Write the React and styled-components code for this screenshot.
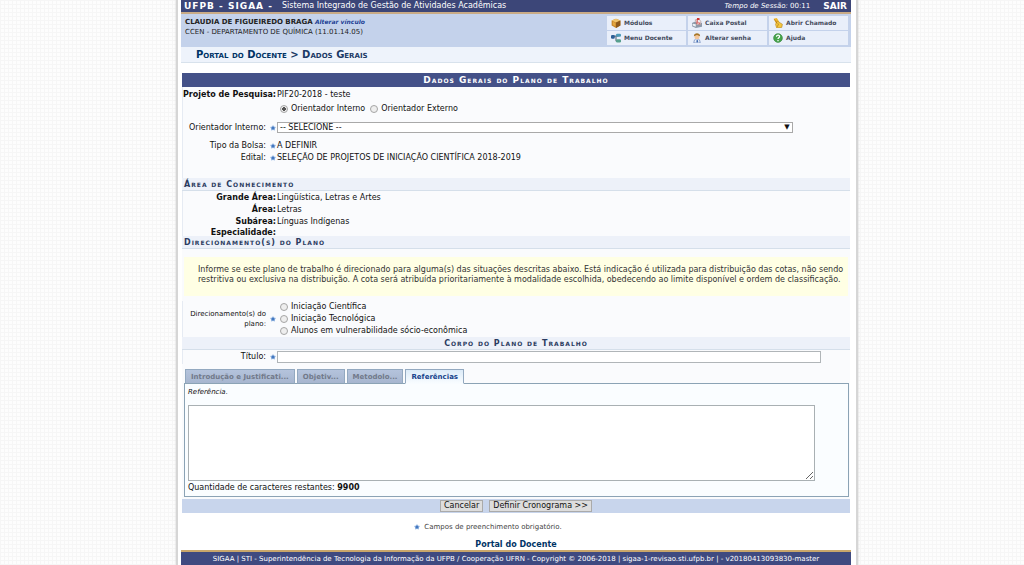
import React, { useState } from "react";
import styled, { createGlobalStyle } from "styled-components";

const GlobalStyle = createGlobalStyle`
	* {
		box-sizing: border-box;
	}

	body {
		margin: 0;
		color: #222;
		font-family: Verdana, "DejaVu Sans", sans-serif;
		font-size: 7px;
		line-height: 10px;
		background-color: #fdfdfd;
		background-image: repeating-linear-gradient(0deg, #f6f6f6 0 1px, transparent 1px 4px),
			repeating-linear-gradient(90deg, #f6f6f6 0 1px, transparent 1px 4px);
	}

	input,
	select,
	textarea,
	button {
		margin: 0;
		font: inherit;
		color: inherit;
	}

	a {
		color: #003366;
		text-decoration: none;
	}
`;

const Wrapper = styled.div`
	width: 100%;
	max-width: 692px;
	margin: 0 auto;
	padding-left: 10px;
`;

const Page = styled.div`
	padding: 0 5px 0 3px;
	background: #fff;
	border: solid #d6d6d6;
	border-width: 0 2px;
	box-shadow: 0 0 2px #ccc;
`;

const TopBar = styled.header`
	display: flex;
	align-items: center;
	height: 14px;
	padding: 0 4px 0 3px;
	color: #fff;
	background: #3c4678;
	border-bottom: 2px solid #c9ab86;
`;

const Brand = styled.h1`
	margin: 0 9px 0 0;
	font-size: 9px;
	letter-spacing: 1px;
`;

const SystemName = styled.span`
	font-size: 8px;
`;

const Session = styled.span`
	margin-left: auto;
	margin-right: 13px;
`;

const Exit = styled.a`
	color: #fff;
	font-size: 9px;
	font-weight: bold;
`;

const UserBar = styled.div`
	display: flex;
	justify-content: space-between;
	height: 33px;
	padding: 2px 3px 1px 4px;
	background: #c4d2eb;
`;

const UserInfo = styled.div`
	padding-top: 1px;
`;

const ChangeLink = styled.a`
	color: #1c3f95;
	font-size: 6px;
	font-style: italic;
	font-weight: bold;
`;

const Shortcuts = styled.nav`
	display: grid;
	grid-template-columns: repeat(3, 79px);
	grid-auto-rows: 14px;
	gap: 1px 2px;
`;

const Shortcut = styled.a`
	display: flex;
	align-items: center;
	gap: 3px;
	padding-left: 4px;
	color: #444b5c;
	font-size: 6px;
	font-weight: bold;
	background: #e9effa;

	svg {
		width: 10px;
		height: 10px;
	}
`;

const Breadcrumb = styled.nav`
	height: 16px;
	padding: 3px 15px;
	color: #1c3a66;
	font-size: 10px;
	font-weight: bold;
	font-variant: small-caps;
	background: #eef3fb;
	border-bottom: 1px solid #d8e2ec;
`;

const Form = styled.form`
	margin: 10px 1px 0;
	font-size: 8px;
	background: #fafbfd;
`;

const FormTitle = styled.h2`
	height: 14px;
	margin: 0;
	padding: 2px;
	color: #fff;
	font-size: 9px;
	letter-spacing: 1px;
	font-variant: small-caps;
	text-align: center;
	background: #445188;
`;

const SectionTitle = styled.h3`
	height: 13px;
	margin: 0;
	padding: 2px 2px 0;
	color: #2b3b60;
	font-size: 8px;
	letter-spacing: 1px;
	font-variant: small-caps;
	text-align: ${({ $align }) => $align || "left"};
	background: #edf1f9;
	border-bottom: 1px solid #d5dfea;
`;

const Fields = styled.div`
	padding-top: ${({ $top }) => $top || 0}px;
	padding-bottom: ${({ $bottom }) => $bottom || 0}px;
	border-left: 1px solid #e6ebf3;
`;

const Row = styled.div`
	display: grid;
	grid-template-columns: 94px 1fr;
	align-items: center;
	height: ${({ $height }) => $height || 12}px;
	color: #111;
`;

const Label = styled.label`
	display: flex;
	align-items: center;
	justify-content: flex-end;
	padding-right: 1px;
	font-size: ${({ $small }) => ($small ? 7 : 8)}px;
	font-weight: ${({ $bold }) => ($bold ? "bold" : "normal")};
	text-align: right;
	white-space: ${({ $small }) => ($small ? "normal" : "nowrap")};
`;

const Star = styled.svg`
	flex: none;
	width: 6px;
	height: 6px;
	margin-left: 4px;
`;

const Choices = styled.div`
	display: flex;
	flex-direction: ${({ $stacked }) => ($stacked ? "column" : "row")};
	gap: ${({ $stacked }) => ($stacked ? 0 : 5)}px;
	padding-left: 3px;
`;

const Choice = styled.label`
	display: flex;
	align-items: center;
	gap: 3px;
	height: 12px;
`;

const Radio = styled.input.attrs({ type: "radio" })`
	appearance: none;
	width: 8px;
	height: 8px;
	background: #eee;
	border: 1px solid #a5a5a5;
	border-radius: 50%;

	&:checked {
		background: radial-gradient(circle, #555 0 2px, #eee 2px);
	}
`;

const SelectBox = styled.div`
	position: relative;
	width: 90%;

	&::after {
		content: "▼";
		position: absolute;
		top: 0;
		right: 3px;
		font-size: 7px;
		pointer-events: none;
	}
`;

const Select = styled.select`
	display: block;
	appearance: none;
	width: 100%;
	height: 11px;
	padding: 0 2px;
	background: #fff;
	border: 1px solid #a9a9a9;
	border-radius: 0;
`;

const TextInput = styled.input`
	width: 95%;
	height: 12px;
	padding: 0 2px;
	background: #fff;
	border: 1px solid #b0b5b8;
`;

const Notice = styled.p`
	margin: 8px 2px 5px;
	padding: 8px 4px 11px 14px;
	min-height: 39px;
	color: #333;
	background: #ffffe4;
`;

const Tabs = styled.div`
	display: flex;
	gap: 2px;
	padding: 5px 3px 0;
`;

const Tab = styled.button`
	height: 15px;
	padding: 0 5px;
	margin-bottom: -1px;
	color: ${({ $active }) => ($active ? "#15428b" : "#71798a")};
	font-size: 7px;
	font-weight: bold;
	background: ${({ $active }) =>
		$active ? "linear-gradient(#dcebf8, #f8fcff)" : "linear-gradient(#b4c3dc, #a7b6cf)"};
	border: 1px solid #93a9c0;
	border-bottom-color: ${({ $active }) => ($active ? "#f8fcff" : "#8ba3b5")};
	z-index: ${({ $active }) => ($active ? 1 : 0)};
`;

const TabPanel = styled.div`
	height: 114px;
	margin: 0 1px 2px 2px;
	padding: 3px;
	color: #111;
	background: #fafdff;
	border: 1px solid #8ba3b5;
`;

const Hint = styled.label`
	display: block;
	margin-bottom: 8px;
	font-size: 7px;
	font-style: italic;
`;

const TextArea = styled.textarea`
	display: block;
	width: calc(100% - 30px);
	height: 76px;
	margin-bottom: 2px;
	background: #fff;
	border: 1px solid #a9b0b3;
`;

const Actions = styled.div`
	display: flex;
	justify-content: center;
	gap: 6px;
	padding: 1px 0;
	background: #c8d5ec;
`;

const Button = styled.button`
	height: 12px;
	padding: 0 3px;
	color: #111;
	background: #ddd;
	border: 1px solid #aaa;
`;

const Required = styled.p`
	display: flex;
	align-items: center;
	justify-content: center;
	gap: 4px;
	margin: 9px 0 8px;
	padding-right: 56px;
	color: #444;

	svg {
		margin: 0;
	}
`;

const PortalLink = styled.a`
	display: block;
	font-size: 8px;
	font-weight: bold;
	text-align: center;
`;

const Footer = styled.footer`
	min-height: 15px;
	padding-top: 2px;
	color: #fff;
	text-align: center;
	background: #3f4a80;
	border-top: 2px solid #c9a66b;
`;

const StarIcon = () => (
	<Star viewBox="0 0 12 12" aria-hidden="true">
		<path d="M6 0l2 3 4 1-2 3v4l-4-1-4 1V7L0 4l4-1z" fill="#9dbce4" />
		<circle cx="6" cy="6" r="3" fill="#4478c0" />
	</Star>
);

const ICONS = {
	modules: (
		<>
			<path d="M1 4l7-3 7 3v8l-7 4-7-4z" fill="#c8882a" />
			<path d="M1 4l7-3 7 3-7 3z" fill="#f0c46c" />
			<path d="M8 7l7-3v8l-7 4z" fill="#8d591b" />
			<path d="M3 6l4 2v5l-4-2z" fill="#e4a740" />
		</>
	),
	mail: (
		<>
			<path d="M0 8l4-2 12 2v6l-10 2-6-3z" fill="#8d9aaa" />
			<path d="M1 9l5 1v4l-5-2z" fill="#edf2f6" />
			<path d="M5 3l6-1 3 3v5l-6 1z" fill="#f1f1f1" stroke="#a88" />
			<path d="M8 0h4v3H9v6H7z" fill="#cf3535" />
			<path d="M10 6l3 2-2 3z" fill="#cf5151" />
		</>
	),
	ticket: (
		<>
			<path d="M1 1l5-1 4 6-5 3z" fill="#efb62c" />
			<path d="M7 5l8 5-1 5-8 1-2-6z" fill="#f4c83e" stroke="#b78420" />
			<path d="M2 2l5 7M9 9l-2 5" stroke="#a86c17" />
		</>
	),
	menu: (
		<>
			<path d="M4 5h4v7h3M8 5h4" fill="none" stroke="#678" strokeWidth="2" />
			<rect x="0" y="3" width="6" height="6" rx="2" fill="#2c5f96" />
			<rect x="8" y="1" width="8" height="5" rx="2" fill="#4c9ab9" />
			<rect x="8" y="10" width="8" height="5" rx="2" fill="#57a08e" />
		</>
	),
	password: (
		<>
			<path d="M3 16c0-5 2-7 5-7s5 2 5 7z" fill="#e8eef7" stroke="#5575b0" />
			<circle cx="8" cy="6" r="4" fill="#f4c79c" />
			<path d="M3 5c0-6 10-6 10 0L8 3z" fill="#a67628" />
			<path d="M8 10l2 3-2 3-1-3z" fill="#3261ad" />
		</>
	),
	help: (
		<>
			<circle cx="8" cy="8" r="7" fill="#47a54b" stroke="#2f8138" />
			<path d="M5.5 6c0-3.500 5-3.500 5-.5 0 2-2.500 2-2.500 4M8 11v2" fill="none" stroke="#fff" strokeWidth="2" />
		</>
	),
};

const shortcuts = [
	{ icon: "modules", text: "Módulos" },
	{ icon: "mail", text: "Caixa Postal" },
	{ icon: "ticket", text: "Abrir Chamado" },
	{ icon: "menu", text: "Menu Docente" },
	{ icon: "password", text: "Alterar senha" },
	{ icon: "help", text: "Ajuda" },
];

const areas = [
	{ label: "Grande Área:", value: "Lingüística, Letras e Artes" },
	{ label: "Área:", value: "Letras" },
	{ label: "Subárea:", value: "Línguas Indígenas" },
];

const directions = ["Iniciação Científica", "Iniciação Tecnológica", "Alunos em vulnerabilidade sócio-econômica"];

const tabs = ["Introdução e Justificati...", "Objetiv...", "Metodolo...", "Referências"];

const App = () => {
	const [advisor, setAdvisor] = useState("Interno");
	const [activeTab, setActiveTab] = useState(3);
	const [reference, setReference] = useState("");

	return (
		<Wrapper>
			<GlobalStyle />
			<Page>
				<TopBar>
					<Brand>UFPB - SIGAA -</Brand>
					<SystemName>Sistema Integrado de Gestão de Atividades Acadêmicas</SystemName>
					<Session>
						<em>Tempo de Sessão:</em> 00:11
					</Session>
					<Exit href="#sair">SAIR</Exit>
				</TopBar>
				<UserBar>
					<UserInfo>
						<strong>CLAUDIA DE FIGUEIREDO BRAGA</strong> <ChangeLink href="#vinculo">Alterar vínculo</ChangeLink>
						<div>CCEN - DEPARTAMENTO DE QUÍMICA (11.01.14.05)</div>
					</UserInfo>
					<Shortcuts>
						{shortcuts.map(({ icon, text }) => (
							<Shortcut key={icon} href={`#${icon}`}>
								<svg viewBox="0 0 16 16" aria-hidden="true">
									{ICONS[icon]}
								</svg>
								{text}
							</Shortcut>
						))}
					</Shortcuts>
				</UserBar>
				<Breadcrumb>
					<a href="#portal">Portal do Docente</a> &gt; Dados Gerais
				</Breadcrumb>

				<Form onSubmit={(e) => e.preventDefault()}>
					<FormTitle>Dados Gerais do Plano de Trabalho</FormTitle>
					<Fields $bottom={14}>
						<Row $height={15}>
							<Label as="span" $bold>
								Projeto de Pesquisa:
							</Label>
							<span>PIF20-2018 - teste</span>
						</Row>
						<Row $height={13}>
							<span />
							<Choices>
								{["Interno", "Externo"].map((kind) => (
									<Choice key={kind}>
										<Radio name="advisor" checked={advisor === kind} onChange={() => setAdvisor(kind)} />
										Orientador {kind}
									</Choice>
								))}
							</Choices>
						</Row>
						<Row $height={25}>
							<Label htmlFor="advisor-select">
								Orientador Interno:
								<StarIcon />
							</Label>
							<SelectBox>
								<Select id="advisor-select">
									<option>-- SELECIONE --</option>
								</Select>
							</SelectBox>
						</Row>
						<Row>
							<Label as="span">
								Tipo da Bolsa:
								<StarIcon />
							</Label>
							<span>A DEFINIR</span>
						</Row>
						<Row>
							<Label as="span">
								Edital:
								<StarIcon />
							</Label>
							<span>SELEÇÃO DE PROJETOS DE INICIAÇÃO CIENTÍFICA 2018-2019</span>
						</Row>
					</Fields>

					<SectionTitle>Área de Conhecimento</SectionTitle>
					<Fields $top={1}>
						{areas.map(({ label, value }) => (
							<Row key={label}>
								<Label as="span" $bold>
									{label}
								</Label>
								<span>{value}</span>
							</Row>
						))}
						<Row $height={8}>
							<Label as="span" $bold>
								Especialidade:
							</Label>
						</Row>
					</Fields>

					<SectionTitle>Direcionamento(s) do Plano</SectionTitle>
					<Notice>
						Informe se este plano de trabalho é direcionado para alguma(s) das situações descritas abaixo. Está
						indicação é utilizada para distribuição das cotas, não sendo restritiva ou exclusiva na distribuição. A
						cota será atribuída prioritariamente à modalidade escolhida, obedecendo ao limite disponível e ordem de
						classificação.
					</Notice>
					<Fields>
						<Row $height={36}>
							<Label as="span" $small>
								Direcionamento(s) do plano:
								<StarIcon />
							</Label>
							<Choices $stacked>
								{directions.map((text) => (
									<Choice key={text}>
										<Radio name="direction" />
										{text}
									</Choice>
								))}
							</Choices>
						</Row>
					</Fields>

					<SectionTitle $align="center">Corpo do Plano de Trabalho</SectionTitle>
					<Fields>
						<Row $height={14}>
							<Label htmlFor="title">
								Título:
								<StarIcon />
							</Label>
							<TextInput id="title" type="text" />
						</Row>
					</Fields>
					<Tabs role="tablist">
						{tabs.map((text, i) => (
							<Tab
								key={text}
								type="button"
								role="tab"
								aria-selected={i === activeTab}
								$active={i === activeTab}
								onClick={() => setActiveTab(i)}
							>
								{text}
							</Tab>
						))}
					</Tabs>
					<TabPanel role="tabpanel">
						<Hint htmlFor="reference">Referência.</Hint>
						<TextArea id="reference" value={reference} onChange={(e) => setReference(e.target.value)} />
						Quantidade de caracteres restantes: <strong>{9900 - reference.length}</strong>
					</TabPanel>
					<Actions>
						<Button type="button">Cancelar</Button>
						<Button type="submit">Definir Cronograma &gt;&gt;</Button>
					</Actions>
				</Form>

				<Required>
					<StarIcon />
					Campos de preenchimento obrigatório.
				</Required>
				<PortalLink href="#portal">Portal do Docente</PortalLink>
				<Footer>
					SIGAA | STI - Superintendência de Tecnologia da Informação da UFPB / Cooperação UFRN - Copyright © 2006-2018
					| sigaa-1-revisao.sti.ufpb.br | - v20180413093830-master
				</Footer>
			</Page>
		</Wrapper>
	);
};

export default App;
